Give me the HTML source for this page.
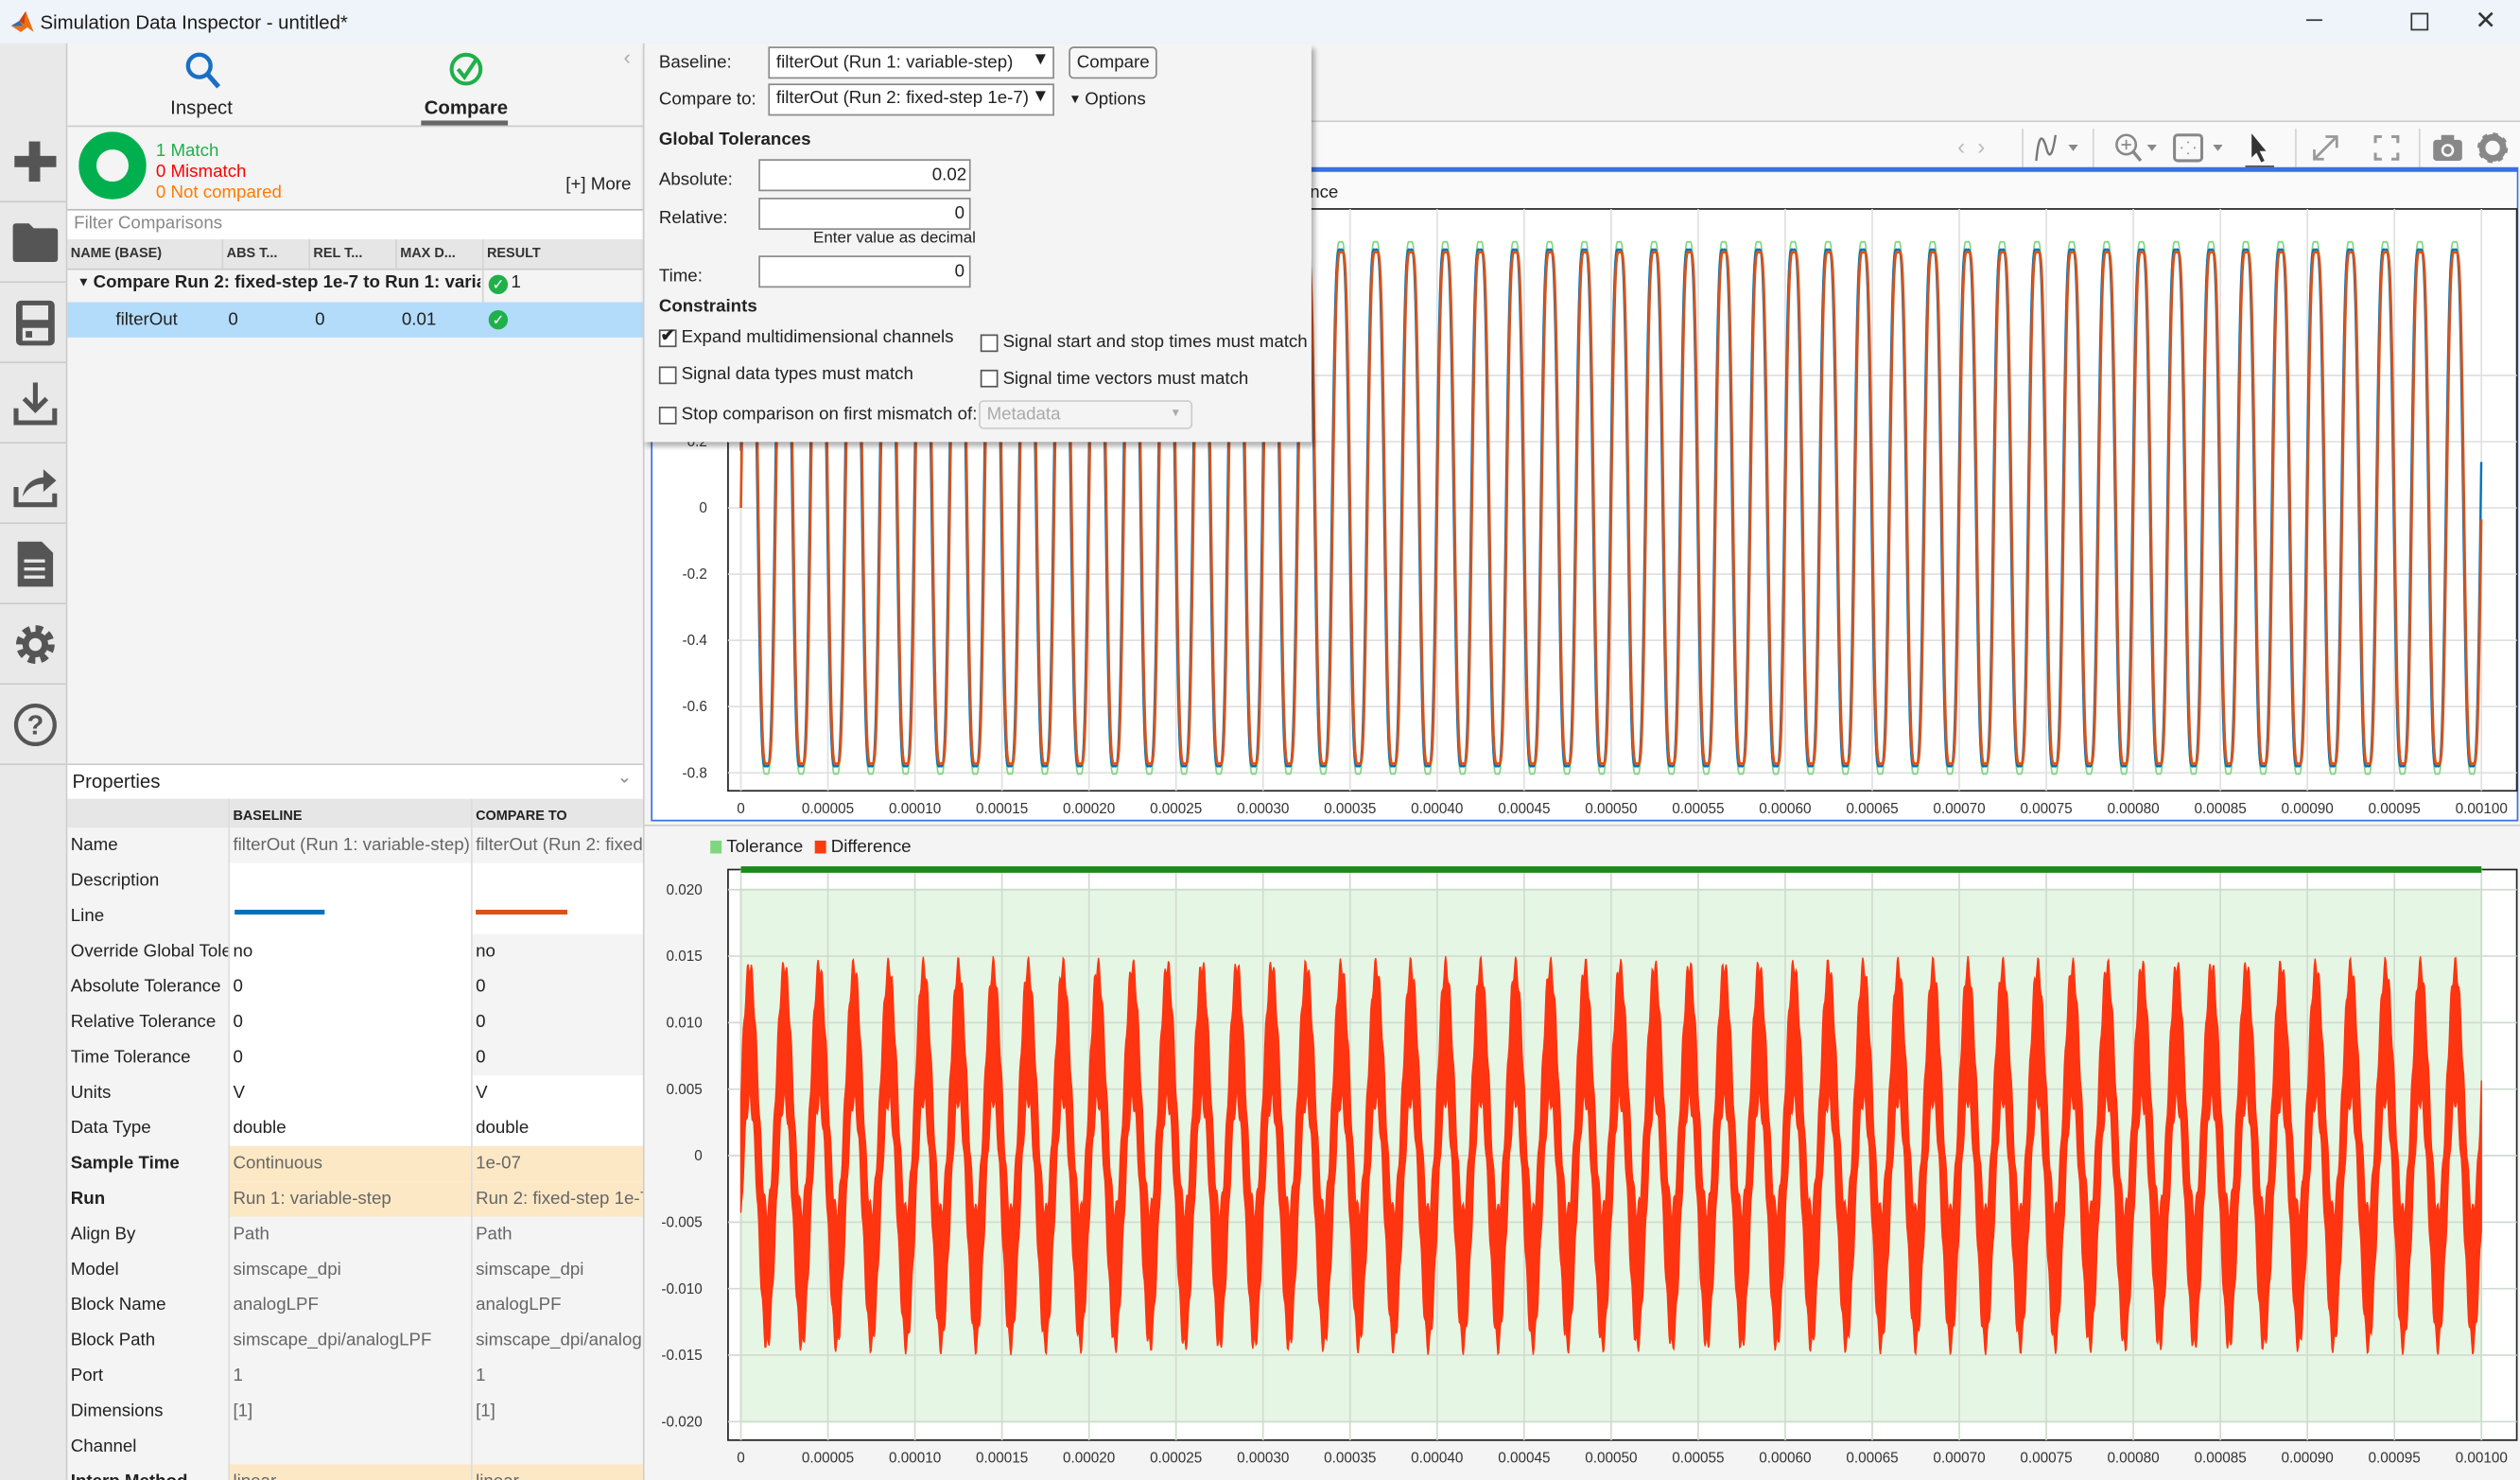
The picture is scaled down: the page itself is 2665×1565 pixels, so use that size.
<!DOCTYPE html>
<html><head><meta charset="utf-8">
<style>
html,body{margin:0;padding:0;width:2665px;height:1565px;overflow:hidden;background:#f3f3f3;}
#root{position:absolute;left:0;top:0;width:1568px;height:921px;transform:scale(1.69962);transform-origin:0 0;font-family:"Liberation Sans",Arial,sans-serif;font-size:11px;color:#222;background:#f5f5f5;overflow:hidden;}
.a{position:absolute;white-space:nowrap;}
.box{position:absolute;background:#fff;border:1px solid #8a8a8a;box-sizing:border-box;}
.cb{position:absolute;width:11px;height:11px;border:1px solid #555;background:#fff;box-sizing:border-box;}
.sep{position:absolute;width:1px;background:#d4d4d4;}
</style></head><body>
<div id="root">
<div class="a" style="left:0;top:0;width:1568px;height:27px;background:#eff3fa;"></div>
<svg class="a" style="left:6px;top:6px" width="16" height="16" viewBox="0 0 16 16"><path d="M1 10 L6 7 L10 1 L15 14 L11 11 L7 14 Z" fill="#e8701a"/><path d="M1 10 L6 7 L8 10 Z" fill="#2a6fb3"/><path d="M6 7 L10 1 L9 9 Z" fill="#c8401a"/></svg>
<div class="a" style="left:25px;top:7px;font-size:12px;color:#1a1a1a">Simulation Data Inspector - untitled*</div>
<div class="a" style="left:1435px;top:12px;width:10px;height:1px;background:#333"></div>
<div class="a" style="left:1500px;top:8px;width:9px;height:9px;border:1px solid #333"></div>
<div class="a" style="left:1540px;top:3px;font-size:16px;color:#333">✕</div>

<div class="a" style="left:0;top:27px;width:41px;height:894px;background:#e9e9e9;border-right:1px solid #ccc"></div>
<div class="a" style="left:9px;top:97px;width:26px;height:7px;background:#555"></div>
<div class="a" style="left:18px;top:88px;width:7px;height:25px;background:#555"></div>
<div class="a" style="left:0;top:125px;width:41px;height:1px;background:#ccc"></div>
<svg class="a" style="left:7px;top:138px" width="30" height="26"><path d="M1 3 Q1 1 3 1 L11 1 L14 4 L27 4 Q29 4 29 6 L29 23 Q29 25 27 25 L3 25 Q1 25 1 23 Z" fill="#555"/></svg>
<div class="a" style="left:0;top:175px;width:41px;height:1px;background:#ccc"></div>
<svg class="a" style="left:9px;top:186px" width="26" height="30"><rect x="1" y="1" width="24" height="28" rx="3" fill="#555"/><rect x="5" y="4" width="16" height="9" fill="#e9e9e9"/><rect x="5" y="18" width="16" height="8" fill="#e9e9e9"/><rect x="7" y="20" width="4" height="4" fill="#555"/></svg>
<div class="a" style="left:0;top:225px;width:41px;height:1px;background:#ccc"></div>
<svg class="a" style="left:7px;top:236px" width="30" height="30"><path d="M15 2 L15 18 M8 12 L15 19 L22 12" stroke="#555" stroke-width="3" fill="none"/><path d="M3 18 L3 27 L27 27 L27 18" stroke="#555" stroke-width="3" fill="none"/></svg>
<div class="a" style="left:0;top:275px;width:41px;height:1px;background:#ccc"></div>
<svg class="a" style="left:7px;top:287px" width="30" height="30"><path d="M3 16 L3 27 L27 27 L27 20" stroke="#555" stroke-width="3" fill="none"/><path d="M7 22 Q9 11 20 10 L20 5 L28 12 L20 19 L20 14 Q12 14 7 22 Z" fill="#555"/></svg>
<div class="a" style="left:0;top:325px;width:41px;height:1px;background:#ccc"></div>
<svg class="a" style="left:9px;top:336px" width="26" height="30"><path d="M2 1 L17 1 L24 8 L24 29 L2 29 Z" fill="#555"/><path d="M6 13 H19 M6 18 H19 M6 23 H19" stroke="#e9e9e9" stroke-width="2"/></svg>
<div class="a" style="left:0;top:375px;width:41px;height:1px;background:#ccc"></div>
<svg class="a" style="left:7px;top:386px" width="30" height="30"><circle cx="15" cy="15" r="9" fill="none" stroke="#555" stroke-width="6" stroke-dasharray="4 3.07"/><circle cx="15" cy="15" r="8" fill="#555"/><circle cx="15" cy="15" r="4" fill="#e9e9e9"/></svg>
<div class="a" style="left:0;top:425px;width:41px;height:1px;background:#ccc"></div>
<svg class="a" style="left:7px;top:436px" width="30" height="30"><circle cx="15" cy="15" r="12" fill="none" stroke="#555" stroke-width="2.5"/><text x="15" y="21" font-size="17" font-weight="bold" text-anchor="middle" fill="#555" font-family="Liberation Sans">?</text></svg>
<div class="a" style="left:0;top:475px;width:41px;height:1px;background:#ccc"></div>

<div class="a" style="left:42px;top:27px;width:358px;height:894px;background:#f4f4f4;border-right:1px solid #ccc"></div>
<svg class="a" style="left:114px;top:31px" width="24" height="26"><circle cx="10" cy="10" r="7" fill="none" stroke="#1a6fc4" stroke-width="2.6"/><path d="M15 15 L22 23" stroke="#1a6fc4" stroke-width="3"/></svg>
<div class="a" style="left:106px;top:60px;font-size:12px">Inspect</div>
<svg class="a" style="left:278px;top:31px" width="24" height="24"><circle cx="12" cy="12" r="9" fill="none" stroke="#1fb04a" stroke-width="2.4"/><path d="M7 12 L11 17 L19 5" fill="none" stroke="#1fb04a" stroke-width="2.4"/></svg>
<div class="a" style="left:264px;top:60px;font-size:12px;font-weight:bold">Compare</div>
<div class="a" style="left:42px;top:78px;width:358px;height:1px;background:#ccc"></div>
<div class="a" style="left:262px;top:75px;width:54px;height:3px;background:#666"></div>
<div class="a" style="left:388px;top:28px;color:#aaa;font-size:13px">‹</div>
<div class="a" style="left:49px;top:82px;width:42px;height:42px;border-radius:50%;border:11px solid #00b04e;box-sizing:border-box"></div>
<div class="a" style="left:97px;top:88px;color:#1fb04a">1 Match</div>
<div class="a" style="left:97px;top:101px;color:#f00">0 Mismatch</div>
<div class="a" style="left:97px;top:114px;color:#ff7a00">0 Not compared</div>
<div class="a" style="left:352px;top:109px">[+] More</div>
<div class="a" style="left:42px;top:130px;width:358px;height:18px;background:#fff;border-top:1px solid #bbb;border-bottom:1px solid #ccc"></div>
<div class="a" style="left:46px;top:133px;color:#888">Filter Comparisons</div>
<div class="a" style="left:42px;top:149px;width:358px;height:18px;background:#e6e6e6;border-bottom:1px solid #ccc"></div>
<div class="a" style="left:44px;top:152px;font-size:8.5px;font-weight:bold;color:#333">NAME (BASE)</div>
<div class="a" style="left:141px;top:152px;font-size:8.5px;font-weight:bold;color:#333">ABS T...</div>
<div class="a" style="left:195px;top:152px;font-size:8.5px;font-weight:bold;color:#333">REL T...</div>
<div class="a" style="left:249px;top:152px;font-size:8.5px;font-weight:bold;color:#333">MAX D...</div>
<div class="a" style="left:303px;top:152px;font-size:8.5px;font-weight:bold;color:#333">RESULT</div>
<div class="sep" style="left:138px;top:149px;height:18px"></div><div class="sep" style="left:192px;top:149px;height:18px"></div><div class="sep" style="left:246px;top:149px;height:18px"></div><div class="sep" style="left:300px;top:149px;height:61px"></div>
<div class="a" style="left:48px;top:171px;font-size:8px">▼</div>
<div class="a" style="left:58px;top:170px;font-weight:bold;width:241px;overflow:hidden">Compare Run 2: fixed-step 1e-7 to Run 1: variab</div>
<div class="a" style="left:304px;top:171px;width:12px;height:12px;border-radius:50%;background:#1fb04a;color:#fff;font-size:9px;text-align:center;line-height:12px">✓</div>
<div class="a" style="left:318px;top:170px">1</div>
<div class="a" style="left:42px;top:188px;width:358px;height:22px;background:#b3dcfb"></div>
<div class="a" style="left:72px;top:193px">filterOut</div>
<div class="a" style="left:142px;top:193px">0</div>
<div class="a" style="left:196px;top:193px">0</div>
<div class="a" style="left:250px;top:193px">0.01</div>
<div class="a" style="left:304px;top:193px;width:12px;height:12px;border-radius:50%;background:#1fb04a;color:#fff;font-size:9px;text-align:center;line-height:12px">✓</div>

<div class="a" style="left:42px;top:475px;width:358px;height:22px;background:#fff;border-top:1px solid #ccc;border-bottom:1px solid #ccc"></div>
<div class="a" style="left:45px;top:479px;font-size:12px">Properties</div>
<div class="a" style="left:384px;top:477px;color:#888">⌄</div>
<div class="a" style="left:42px;top:497px;width:358px;height:18px;background:#e6e6e6"></div>
<div class="a" style="left:145px;top:502px;font-size:8.5px;font-weight:bold">BASELINE</div>
<div class="a" style="left:296px;top:502px;font-size:8.5px;font-weight:bold">COMPARE TO</div>
<div id="props"></div>

<div class="a" style="left:401px;top:27px;width:1167px;height:48px;background:#f4f4f4;border-bottom:1px solid #ccc"></div>
<div class="a" style="left:401px;top:76px;width:1167px;height:29px;background:#f9f9f9"></div>
<div class="a" style="left:1218px;top:83px;color:#bbb;font-size:14px">‹&nbsp;&nbsp;›</div>
<div class="sep" style="left:1258px;top:80px;height:25px"></div>
<svg class="a" style="left:1265px;top:82px" width="32" height="20"><path d="M2 18 Q4 -4 8 9 Q11 22 14 2" fill="none" stroke="#777" stroke-width="1.4"/><path d="M22 8 L28 8 L25 12 Z" fill="#888"/></svg>
<div class="sep" style="left:1302px;top:80px;height:25px"></div>
<svg class="a" style="left:1315px;top:82px" width="30" height="20"><circle cx="8" cy="8" r="6" fill="none" stroke="#888" stroke-width="1.5"/><path d="M8 5 V11 M5 8 H11" stroke="#888"/><path d="M12 12 L17 18" stroke="#888" stroke-width="2"/><path d="M21 8 L27 8 L24 12 Z" fill="#888"/></svg>
<svg class="a" style="left:1352px;top:82px" width="36" height="20"><rect x="1" y="2" width="17" height="16" rx="2" fill="none" stroke="#888" stroke-width="1.8"/><path d="M9.5 6 v1 M9.5 13 v1 M5 10 h1 M13 10 h1" stroke="#888"/><path d="M25 8 L31 8 L28 12 Z" fill="#888"/></svg>
<svg class="a" style="left:1397px;top:82px" width="20" height="24"><path d="M4 1 L4 16 L7 13 L10 19 L12 18 L9 12 L13 12 Z" fill="#333"/><rect x="0" y="21" width="18" height="2.5" fill="#444"/></svg>
<div class="sep" style="left:1428px;top:80px;height:25px"></div>
<svg class="a" style="left:1437px;top:83px" width="20" height="18"><path d="M3 16 L16 3 M3 10 V16 H9 M10 2 H17 V9" fill="none" stroke="#999" stroke-width="1.6"/></svg>
<svg class="a" style="left:1477px;top:84px" width="16" height="16"><path d="M1 5 V1 H5 M11 1 H15 V5 M15 11 V15 H11 M5 15 H1 V11" fill="none" stroke="#999" stroke-width="1.8"/></svg>
<div class="sep" style="left:1505px;top:80px;height:25px"></div>
<svg class="a" style="left:1513px;top:83px" width="20" height="18"><rect x="1" y="4" width="18" height="13" rx="2" fill="#888"/><rect x="6" y="1" width="8" height="4" fill="#888"/><circle cx="10" cy="10.5" r="4" fill="#f9f9f9"/><circle cx="10" cy="10.5" r="2.5" fill="#888"/></svg>
<svg class="a" style="left:1541px;top:82px" width="20" height="20"><circle cx="10" cy="10" r="6.5" fill="none" stroke="#888" stroke-width="4" /><circle cx="10" cy="10" r="8" fill="none" stroke="#888" stroke-width="3" stroke-dasharray="3 3.28"/><circle cx="10" cy="10" r="2.5" fill="#f9f9f9"/></svg>

<div class="a" style="left:405px;top:104px;width:1162px;height:407px;background:#fff;border:1px solid #3a6fe8;border-top:3px solid #3a6fe8;box-sizing:border-box"></div>
<div class="a" style="left:406px;top:107px;width:1160px;height:23px;background:#fafafa"></div>
<div class="a" style="left:815px;top:114px">nce</div>
<svg class="a" id="top" style="left:405px;top:104px" width="1162" height="407"></svg>
<div class="a" style="left:401px;top:513px;width:1167px;height:408px;background:#f4f4f4;border-top:1px solid #ccc"></div>
<div class="a" style="left:442px;top:523px;width:7px;height:8px;background:#7ed67e"></div>
<div class="a" style="left:452px;top:521px">Tolerance</div>
<div class="a" style="left:507px;top:523px;width:7px;height:8px;background:#ff3a10"></div>
<div class="a" style="left:517px;top:521px">Difference</div>
<svg class="a" id="bot" style="left:401px;top:513px" width="1167" height="408"></svg>

<div class="a" style="left:400px;top:27px;width:415px;height:248px;background:#f4f4f4;border-left:1px solid #ccc;box-shadow:2px 3px 3px rgba(0,0,0,.3)"></div>
<div class="a" style="left:410px;top:33px">Baseline:</div>
<div class="box" style="left:478px;top:29px;width:178px;height:20px"></div>
<div class="a" style="left:483px;top:33px">filterOut (Run 1: variable-step)</div>
<div class="a" style="left:642px;top:31px;font-size:11px">▼</div>
<div class="a" style="left:665px;top:29px;width:55px;height:20px;border:1px solid #888;border-radius:3px;box-sizing:border-box;background:#f7f7f7"></div>
<div class="a" style="left:670px;top:33px">Compare</div>
<div class="a" style="left:410px;top:56px">Compare to:</div>
<div class="box" style="left:478px;top:52px;width:178px;height:20px"></div>
<div class="a" style="left:483px;top:55px">filterOut (Run 2: fixed-step 1e-7)</div>
<div class="a" style="left:642px;top:54px;font-size:11px">▼</div>
<div class="a" style="left:665px;top:57px;font-size:8px">▼</div>
<div class="a" style="left:675px;top:56px">Options</div>
<div class="a" style="left:410px;top:81px;font-weight:bold">Global Tolerances</div>
<div class="a" style="left:410px;top:106px">Absolute:</div>
<div class="box" style="left:472px;top:99px;width:132px;height:20px"></div>
<div class="a" style="left:580px;top:103px">0.02</div>
<div class="a" style="left:410px;top:130px">Relative:</div>
<div class="box" style="left:472px;top:123px;width:132px;height:20px"></div>
<div class="a" style="left:594px;top:127px">0</div>
<div class="a" style="left:506px;top:143px;font-size:10px">Enter value as decimal</div>
<div class="a" style="left:410px;top:166px">Time:</div>
<div class="box" style="left:472px;top:159px;width:132px;height:20px"></div>
<div class="a" style="left:594px;top:163px">0</div>
<div class="a" style="left:410px;top:185px;font-weight:bold">Constraints</div>
<div class="cb" style="left:410px;top:205px"></div><div class="a" style="left:411px;top:202px;font-size:11px;font-weight:bold">✔</div>
<div class="a" style="left:424px;top:204px">Expand multidimensional channels</div>
<div class="cb" style="left:610px;top:208px"></div><div class="a" style="left:624px;top:207px">Signal start and stop times must match</div>
<div class="cb" style="left:410px;top:228px"></div><div class="a" style="left:424px;top:227px">Signal data types must match</div>
<div class="cb" style="left:610px;top:230px"></div><div class="a" style="left:624px;top:230px">Signal time vectors must match</div>
<div class="cb" style="left:410px;top:253px"></div><div class="a" style="left:424px;top:252px">Stop comparison on first mismatch of:</div>
<div class="a" style="left:609px;top:249px;width:133px;height:18px;border:1px solid #ccc;border-radius:3px;box-sizing:border-box"></div>
<div class="a" style="left:614px;top:252px;color:#aaa">Metadata</div>
<div class="a" style="left:728px;top:254px;color:#aaa;font-size:7px">▼</div>
</div>
<script>
(function(){
var P=document.getElementById('props'),h='';
var rows=[["Name","filterOut (Run 1: variable-step)","filterOut (Run 2: fixed-step 1e-7)",0],["Description","","",1],["Line","","",1],["Override Global Toler","no","no",2],["Absolute Tolerance","0","0",2],["Relative Tolerance","0","0",2],["Time Tolerance","0","0",2],["Units","V","V",1],["Data Type","double","double",1],["Sample Time","Continuous","1e-07",3],["Run","Run 1: variable-step","Run 2: fixed-step 1e-7",3],["Align By","Path","Path",0],["Model","simscape_dpi","simscape_dpi",0],["Block Name","analogLPF","analogLPF",0],["Block Path","simscape_dpi/analogLPF","simscape_dpi/analogLPF",0],["Port","1","1",0],["Dimensions","[1]","[1]",0],["Channel","","",0],["Interp Method","linear","linear",3]];
rows.forEach(function(r,i){var y=515+i*22;var b1=r[3]==3?'#fde8c6':(r[3]==0?'#f4f4f4':'#fff');var b2=r[3]==3?'#fde8c6':(r[3]==1?'#fff':'#f4f4f4');var col=(r[3]==0||r[3]==3)?'#666':'#222';var bold=r[3]==3?'font-weight:bold;':'';
h+='<div class="a" style="left:142px;top:'+y+'px;width:151px;height:22px;background:'+b1+'"></div><div class="a" style="left:294px;top:'+y+'px;width:106px;height:22px;background:'+b2+'"></div>';
h+='<div class="a" style="left:44px;top:'+(y+5)+'px;width:98px;overflow:hidden;'+bold+'">'+r[0]+'</div>';
h+='<div class="a" style="left:145px;top:'+(y+5)+'px;width:148px;overflow:hidden;color:'+col+'">'+r[1]+'</div>';
h+='<div class="a" style="left:296px;top:'+(y+5)+'px;width:104px;overflow:hidden;color:'+col+'">'+r[2]+'</div>';});
h+='<div class="a" style="left:146px;top:566px;width:56px;height:3px;background:#0072bd"></div><div class="a" style="left:296px;top:566px;width:57px;height:3px;background:#d95319"></div>';
h+='<div class="sep" style="left:293px;top:497px;height:424px;background:#ddd"></div><div class="sep" style="left:142px;top:497px;height:424px;background:#ddd"></div>';
P.innerHTML=h;
var X0=461,X1=1544;
function ticks(ox,oy,yb){var s='';for(var i=0;i<=20;i++){var x=X0+i*(X1-X0)/20-ox;var l=i==0?'0':(i*0.00005).toFixed(5);s+='<line x1="'+x+'" x2="'+x+'" y1="0" y2="'+(yb-oy)+'" stroke="#e0e0e0"/>';s+='<text x="'+x+'" y="'+(yb-oy+14)+'" font-size="9" text-anchor="middle" fill="#333" font-family="Liberation Sans">'+l+'</text>';}return s;}
var ox=405,oy=104,s='';
s+='<rect x="'+(453-ox)+'" y="'+(130-oy)+'" width="'+(1566-453)+'" height="'+(492-130)+'" fill="#fff" stroke="#222"/>';
s+='<g>'+ticks(ox,oy,492).replace(/y1="0"/g,'y1="'+(130-oy)+'"')+'</g>';
var yl=[[0.4,'0.4'],[0.2,'0.2'],[0,'0'],[-0.2,'-0.2'],[-0.4,'-0.4'],[-0.6,'-0.6'],[-0.8,'-0.8']];
function ty(v){return 316-v*206-oy;}
yl.forEach(function(a){var y=ty(a[0]);if(y+oy>135){s+='<line x1="'+(453-ox)+'" x2="'+(1566-ox)+'" y1="'+y+'" y2="'+y+'" stroke="#e0e0e0"/><text x="'+(440-ox)+'" y="'+(y+3)+'" font-size="9" text-anchor="end" fill="#333" font-family="Liberation Sans">'+a[1]+'</text>';}});
function wave(off,sh){var p=[];for(var x=X0;x<=X1;x+=0.35){var th=(x-X0+sh)/21.66*2*Math.PI;var v=Math.sin(th)+0.12*Math.sin(3*th);v=v*0.886*(1+off);p.push((x-ox).toFixed(2)+','+ty(v).toFixed(2));}return p.join(' ');}
s+='<polyline points="'+wave(0.03,0.4)+'" fill="none" stroke="#7fd87f" stroke-width="1"/>';
s+='<polyline points="'+wave(0,0.5)+'" fill="none" stroke="#0072bd" stroke-width="1.4"/>';
s+='<polyline points="'+wave(-0.01,0)+'" fill="none" stroke="#d95319" stroke-width="1.6"/>';
document.getElementById('top').innerHTML=s;
ox=401;oy=513;s='';
function by(v){return 719-v*8275-oy;}
s+='<rect x="'+(453-ox)+'" y="'+(541-oy)+'" width="'+(1566-453)+'" height="'+(896-541)+'" fill="#fff" stroke="#222"/>';
s+='<rect x="'+(X0-ox)+'" y="'+by(0.02)+'" width="'+(X1-X0)+'" height="'+(by(-0.02)-by(0.02))+'" fill="#e6f6e4" stroke="#8fdc8f"/>';
s+=ticks(ox,oy,896).replace(/y1="0"/g,'y1="'+(541-oy)+'"').replace(/#e0e0e0/g,'#d0dcd0');
[0.02,0.015,0.01,0.005,0,-0.005,-0.01,-0.015,-0.02].forEach(function(v){var y=by(v);var l=v==0?'0':v.toFixed(3);s+='<line x1="'+(453-ox)+'" x2="'+(1566-ox)+'" y1="'+y+'" y2="'+y+'" stroke="#d0dcd0"/><text x="'+(437-ox)+'" y="'+(y+3)+'" font-size="9" text-anchor="end" fill="#333" font-family="Liberation Sans">'+l+'</text>';});
s+='<rect x="'+(X0-ox)+'" y="'+(539-oy)+'" width="'+(X1-X0)+'" height="4" fill="#1a8a1a"/>';
var up=[],lo=[];
for(var x=X0;x<=X1;x+=0.5){var th=(x-X0)/21.66*2*Math.PI;var c=0.0093*Math.sin(th);var w=0.005+0.0007*Math.sin(x*2.3);
var u=c+w,l=c-w;up.push((x-ox).toFixed(2)+','+by(u).toFixed(2));lo.unshift((x-ox).toFixed(2)+','+by(l).toFixed(2));}
s+='<polygon points="'+up.join(' ')+' '+lo.join(' ')+'" fill="#ff3410" stroke="#ff3410" stroke-width="0.8"/>';
document.getElementById('bot').innerHTML=s;
})();
</script>
</body></html>
